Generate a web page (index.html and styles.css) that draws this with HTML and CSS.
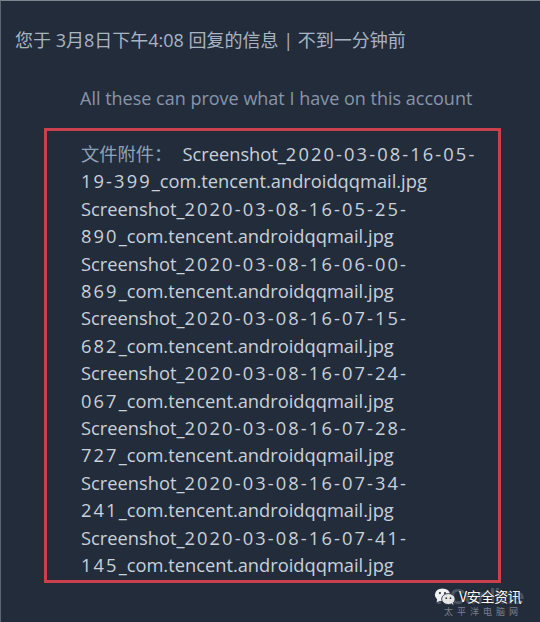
FILE: index.html
```html
<!DOCTYPE html>
<html>
<head>
<meta charset="utf-8">
<link rel="stylesheet" href="styles.css">
</head>
<body>
<div class="frame">
  <div class="meta">您于 3月8日下午4:08 回复的信息 | 不到一分钟前</div>
  <div class="message">All these can prove what I have on this account</div>
  <div class="attach-box">
    <div class="attach">
      <span class="label">文件附件：</span>Screenshot_<span class="n">2020-03-08-16-05-</span><br><span class="n">19-399</span>_com.tencent.androidqqmail.jpg<br>
      Screenshot_<span class="n">2020-03-08-16-05-25-</span><br><span class="n">890</span>_com.tencent.androidqqmail.jpg<br>
      Screenshot_<span class="n">2020-03-08-16-06-00-</span><br><span class="n">869</span>_com.tencent.androidqqmail.jpg<br>
      Screenshot_<span class="n">2020-03-08-16-07-15-</span><br><span class="n">682</span>_com.tencent.androidqqmail.jpg<br>
      Screenshot_<span class="n">2020-03-08-16-07-24-</span><br><span class="n">067</span>_com.tencent.androidqqmail.jpg<br>
      Screenshot_<span class="n">2020-03-08-16-07-28-</span><br><span class="n">727</span>_com.tencent.androidqqmail.jpg<br>
      Screenshot_<span class="n">2020-03-08-16-07-34-</span><br><span class="n">241</span>_com.tencent.androidqqmail.jpg<br>
      Screenshot_<span class="n">2020-03-08-16-07-41-</span><br><span class="n">145</span>_com.tencent.androidqqmail.jpg
    </div>
  </div>
  <div class="watermark">
    <span class="wm-bg">PConline</span>
    <div class="wm-row">
      <svg class="wm-icon" width="22" height="19" viewBox="0 0 26 22">
        <ellipse cx="10" cy="9" rx="9" ry="7.5" fill="#f2f2f2"/>
        <path d="M4 14 L3 18 L8 15 Z" fill="#f2f2f2"/>
        <ellipse cx="17" cy="14" rx="8" ry="6.5" fill="#e6e6e6" stroke="#232c3b" stroke-width="1"/>
        <path d="M21 19 L23 21.5 L22.5 18 Z" fill="#e6e6e6"/>
        <circle cx="7" cy="7" r="1.2" fill="#232c3b"/>
        <circle cx="13" cy="7" r="1.2" fill="#232c3b"/>
        <circle cx="14.5" cy="13" r="1" fill="#232c3b"/>
        <circle cx="19.5" cy="13" r="1" fill="#232c3b"/>
      </svg>
      <span class="wm-text">V安全资讯</span>
    </div>
    <div class="wm-sub">太平洋电脑网</div>
  </div>
</div>
</body>
</html>
```
FILE: styles.css
```css
html, body {
  margin: 0;
  padding: 0;
  background: #232c3b;
}
.frame {
  position: relative;
  width: 540px;
  height: 622px;
  box-sizing: border-box;
  background: #232c3b;
  border-top: 1px solid #7d848e;
  border-left: 1px solid #5d6571;
  font-family: "Open Sans", "Noto Sans CJK SC", sans-serif;
  overflow: hidden;
}
.meta {
  padding: 26px 0 0 14px;
  font-size: 18px;
  line-height: 26px;
  color: #a9b4c1;
}
.message {
  padding: 32px 0 0 79px;
  font-size: 18px;
  line-height: 26px;
  color: #8796aa;
}
.attach-box {
  margin: 17px 0 0 43px;
  width: 457px;
  height: 455px;
  box-sizing: border-box;
  border: 3px solid #c9404f;
  padding: 9px 0 0 34px;
}
.attach {
  font-size: 18.3px;
  line-height: 27.4px;
  color: #c9d1da;
  white-space: nowrap;
}
.n {
  letter-spacing: 2.1px;
}
.label {
  color: #8ea2b8;
  margin-right: 10px;
}
.watermark {
  position: absolute;
  left: 433px;
  top: 585px;
  width: 100px;
  height: 36px;
}
.wm-bg {
  position: absolute;
  left: 2px;
  top: -2px;
  font-family: "Liberation Sans", sans-serif;
  font-weight: bold;
  font-size: 22px;
  color: #4f5664;
  letter-spacing: -1px;
}
.wm-row {
  position: relative;
  display: flex;
  align-items: center;
  gap: 3px;
}
.wm-icon {
  display: block;
}
.wm-text {
  font-family: "Noto Sans CJK SC", sans-serif;
  font-size: 14px;
  line-height: 20px;
  color: #ffffff;
  letter-spacing: -0.3px;
  text-shadow: 0 0 2px #000;
}
.wm-sub {
  position: relative;
  padding-left: 10px;
  font-family: "Noto Sans CJK SC", sans-serif;
  font-size: 9px;
  line-height: 11px;
  letter-spacing: 4px;
  color: #7a808a;
}
```
